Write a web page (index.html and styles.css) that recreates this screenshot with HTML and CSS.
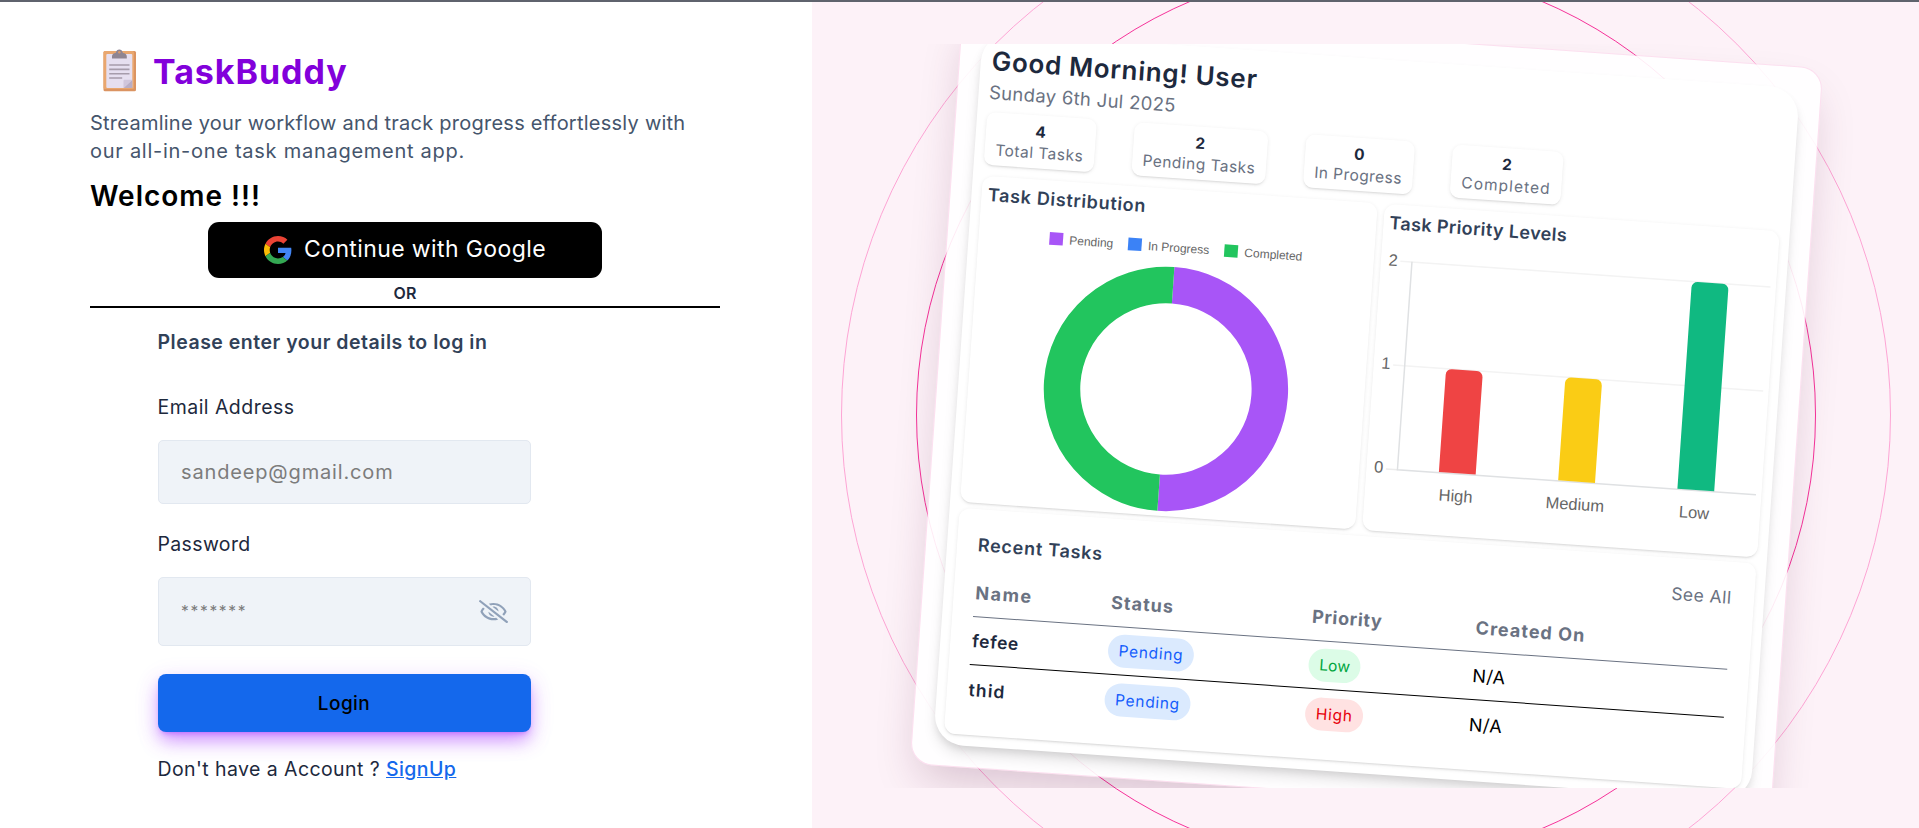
FILE: index.html
```
<!DOCTYPE html>
<html lang="en">
<head>
<meta charset="utf-8">
<title>TaskBuddy</title>
<link rel="stylesheet" href="styles.css">
</head>
<body>
<main class="page">
  <section class="auth">
    <div class="brand">
      <svg class="brand-icon" width="34" height="44" viewBox="0 0 34 44">
        <rect x="0.5" y="2" width="32.5" height="40.3" rx="1.5" fill="#db9462"/>
        <rect x="0.5" y="2" width="30.5" height="38" rx="1.5" fill="#e9a76f"/>
        <rect x="3.3" y="5" width="26" height="34" rx="1" fill="#e6dff0"/>
        <path d="M20.5 39l8.8-8.3V39z" fill="#b9aec6"/>
        <path d="M20.5 39v-7.3q0-1 1-1h7.8z" fill="#d0c6dc"/>
        <path d="M9 7.5c0-2 1.5-3.3 3.6-3.4C13.400 1.500 14.500.5 16.300.5s2.900 1 3.700 3.600c2.100.1 3.800 1.400 3.800 3.400v2H9z" fill="#8f8592"/>
        <circle cx="16.300" cy="3.200" r="1.200" fill="#d99a6c"/>
        <path d="M6.200 16h20.300M6.200 20.400h20.300M6.200 24.700h20.300M6.200 29h13" stroke="#a69cab" stroke-width="1.600"/>
      </svg>
      <h1 class="brand-name">TaskBuddy</h1>
    </div>
    <p class="tagline"><span class="tag-a">Streamline your workflow and track progress effortlessly with</span><br><span class="tag-b">our all-in-one task management app.</span></p>
    <h2 class="welcome">Welcome !!!</h2>
    <button class="google" type="button">
      <svg width="28" height="28" viewBox="0 0 48 48">
        <path fill="#EA4335" d="M24 9.500c3.540 0 6.710 1.220 9.210 3.600l6.850-6.850C35.900 2.380 30.470 0 24 0 14.620 0 6.510 5.380 2.560 13.220l7.980 6.190C12.430 13.720 17.740 9.500 24 9.500z"/>
        <path fill="#4285F4" d="M46.980 24.550c0-1.570-.15-3.090-.38-4.550H24v9.020h12.940c-.58 2.960-2.260 5.480-4.780 7.180l7.730 6c4.510-4.180 7.090-10.360 7.090-17.650z"/>
        <path fill="#FBBC05" d="M10.530 28.590c-.48-1.450-.76-2.990-.76-4.590s.27-3.140.76-4.590l-7.980-6.190C.92 16.460 0 20.120 0 24c0 3.880.92 7.540 2.560 10.780l7.970-6.190z"/>
        <path fill="#34A853" d="M24 48c6.480 0 11.930-2.130 15.890-5.810l-7.730-6c-2.150 1.450-4.920 2.300-8.160 2.300-6.260 0-11.570-4.220-13.470-9.910l-7.980 6.190C6.510 42.620 14.620 48 24 48z"/>
      </svg>
      <span>Continue with Google</span>
    </button>
    <div class="or">OR</div>
    <form class="form">
      <h3 class="form-title">Please enter your details to log in</h3>
      <label class="label">Email Address</label>
      <div class="field"><span class="placeholder">sandeep@gmail.com</span></div>
      <label class="label label-pw">Password</label>
      <div class="field field-pw">
        <span class="placeholder stars">*******</span>
        <svg width="29" height="23.200" viewBox="0 0 640 512" fill="#90a1b9"><path d="M634 471L36 3.510A16 16 0 0 0 13.510 6l-10 12.490A16 16 0 0 0 6 41l598 467.490a16 16 0 0 0 22.490-2.490l10-12.490A16 16 0 0 0 634 471zM296.790 146.470l134.790 105.380C429.360 191.910 380.480 144 320 144a112.260 112.260 0 0 0-23.210 2.470zm46.420 219.070L208.420 260.160C210.650 320.090 259.530 368 320 368a113 113 0 0 0 23.210-2.460zM320 112c98.650 0 189.090 55 237.930 144a285.530 285.530 0 0 1-44 60.200l37.740 29.500a333.700 333.700 0 0 0 52.900-75.110 32.350 32.350 0 0 0 0-29.190C550.290 135.590 442.930 64 320 64c-36.700 0-71.710 7-104.630 18.810l46.410 36.290c18.940-4.300 38.340-7.100 58.220-7.100zm0 288c-98.650 0-189.080-55-237.930-144a285.470 285.470 0 0 1 44.050-60.190l-37.740-29.500a333.600 333.600 0 0 0-52.890 75.100 32.350 32.350 0 0 0 0 29.190C89.720 376.410 197.080 448 320 448c36.700 0 71.710-7.050 104.630-18.810l-46.410-36.280C359.280 397.200 339.890 400 320 400z"/></svg>
      </div>
      <button class="login" type="button">Login</button>
      <p class="signup">Don't have a Account ? <a>SignUp</a></p>
    </form>
  </section>

  <section class="showcase">
    <div class="ring ring-inner"></div>
    <div class="ring ring-outer"></div>
    <div class="stage">
      <div class="frame">
        <div class="board">
          <h2 class="greeting">Good Morning! User</h2>
          <p class="date">Sunday 6th Jul 2025</p>
          <div class="stats">
            <div class="stat stat-1"><b>4</b><span>Total Tasks</span></div>
            <div class="stat stat-2"><b>2</b><span>Pending Tasks</span></div>
            <div class="stat stat-3"><b>0</b><span>In Progress</span></div>
            <div class="stat stat-4"><b>2</b><span>Completed</span></div>
          </div>
          <div class="charts">
            <div class="card">
              <h3 class="card-title t-dist">Task Distribution</h3>
              <svg class="chart" width="396" height="295" viewBox="32.500 198 396 295">
                <g class="legend">
                  <rect x="103.400" y="217.600" width="13.600" height="12.600" fill="#a855f7"/>
                  <rect x="182.200" y="217.600" width="13.600" height="12.600" fill="#3b82f6"/>
                  <rect x="278.600" y="217.600" width="13.600" height="12.600" fill="#22c55e"/>
                  <text x="123.300" y="228.600">Pending</text>
                  <text x="202.200" y="228.600">In Progress</text>
                  <text x="298.800" y="228.600">Completed</text>
                </g>
                <path d="M230 262.050a103.950 103.950 0 0 1 0 207.900" fill="none" stroke="#a855f7" stroke-width="36.500"/>
                <path d="M230 469.950a103.950 103.950 0 0 1 0-207.900" fill="none" stroke="#22c55e" stroke-width="36.500"/>
              </svg>
            </div>
            <div class="card">
              <h3 class="card-title t-prio">Task Priority Levels</h3>
              <svg class="chart" width="396" height="295" viewBox="434.500 198 396 295">
                <path d="M454 222.200H825M454 326.300H825" stroke="#f3f3f3" stroke-width="1.500"/>
                <path d="M454 430.400h12" stroke="#ececec" stroke-width="1.500"/>
                <path d="M465.600 222v208.400H825" fill="none" stroke="#dfe1e3" stroke-width="1.500"/>
                <path d="M507.100 429.800V332.300a6 6 0 0 1 6-6h24.900a6 6 0 0 1 6 6v97.500z" fill="#ef4444"/>
                <path d="M626.700 429.800V332.300a6 6 0 0 1 6-6h24.900a6 6 0 0 1 6 6v97.500z" fill="#facc15"/>
                <path d="M746.200 429.800V228.200a6 6 0 0 1 6-6h24.900a6 6 0 0 1 6 6v201.600z" fill="#10b981"/>
                <g class="ticks">
                  <text x="446.700" y="227.300">2</text>
                  <text x="446.700" y="330.700">1</text>
                  <text x="446.700" y="434.500">0</text>
                  <text x="525.500" y="458.200">High</text>
                  <text x="645" y="458.200">Medium</text>
                  <text x="764.500" y="458.200">Low</text>
                </g>
              </svg>
            </div>
          </div>
          <div class="card recent">
            <div class="recent-head"><h3 class="t-recent">Recent Tasks</h3><span class="see-all">See All</span></div>
            <div class="row head"><span class="h-name">Name</span><span class="h-status">Status</span><span class="h-prio">Priority</span><span class="h-created">Created On</span></div>
            <div class="row"><span class="name">fefee</span><span class="badge blue">Pending</span><span class="badge green">Low</span><span class="na">N/A</span></div>
            <div class="row last"><span class="name name-b">thid</span><span class="badge blue">Pending</span><span class="badge red">High</span><span class="na">N/A</span></div>
          </div>
        </div>
      </div>
    </div>
  </section>
</main>
</body>
</html>
```
FILE: styles.css
```
* { box-sizing: border-box; margin: 0; padding: 0; }
body { font-family: Inter, "Noto Sans", sans-serif; background: #fff; color: #000; overflow: hidden; }
svg { display: block; flex: none; }
button { font-family: inherit; border: 0; }

.page { display: grid; grid-template-columns: 812px 1fr; grid-template-rows: 826px; height: 828px; border-top: 2px solid #5f636d; }

/* Sign-in column */
.auth { padding: 43px 92px 0 90px; }
.brand { display: flex; align-items: center; height: 54px; padding-left: 12.5px; gap: 16.5px; margin-bottom: 10px; }
.brand-icon { margin-top: -2px; }
.brand-name { font-size: 34px; line-height: 54px; font-weight: 700; letter-spacing: .95px; color: #8200db; }
.tagline { font-size: 20px; line-height: 28px; color: #45556c; white-space: nowrap; }
.tag-a { letter-spacing: .245px; }
.tag-b { letter-spacing: .73px; }
.welcome { margin-top: 13px; font-size: 28px; line-height: 36px; font-weight: 600; letter-spacing: .97px; }
.google { display: flex; align-items: center; justify-content: center; gap: 12px; width: 394px; height: 56px; margin: 8px auto 0 118px; border-radius: 11px; background: #000; color: #fff; font-size: 23px; letter-spacing: .39px; }
.google span { padding-bottom: 3px; }
.or { height: 30px; padding-top: 2px; line-height: 26px; font-size: 16px; font-weight: 600; letter-spacing: .2px; text-align: center; color: #1d293d; border-bottom: 2px solid #000; }
.form { width: 373px; margin: 20px 0 0 67.500px; }
.form-title { font-size: 19.5px; line-height: 28px; font-weight: 600; letter-spacing: .51px; color: #314158; white-space: nowrap; }
.label { display: block; margin-top: 37px; font-size: 19.5px; line-height: 28px; letter-spacing: .46px; color: #1d293d; }
.label-pw { margin-top: 26px; letter-spacing: .35px; }
.field { display: flex; align-items: center; justify-content: space-between; height: 64px; margin-top: 19px; padding: 0 22.5px; border: 1px solid #e2e8f0; border-radius: 5px; background: #eff3f8; color: #7c7c7c; font-size: 20px; }
.placeholder { letter-spacing: .85px; }
.field-pw { height: 69px; padding-right: 22px; }
.stars { font-size: 15.5px; letter-spacing: 1.7px; }
.login { display: block; width: 100%; height: 58px; margin-top: 28px; border-radius: 8px; background: #1468ec; font-size: 19px; font-weight: 500; letter-spacing: .456px; box-shadow: 0 10px 18px -2px rgba(173, 70, 255, .55), 0 4px 6px -4px rgba(173, 70, 255, .8), 0 6px 26px rgba(173, 70, 255, .14); }
.signup { margin-top: 23px; font-size: 19.5px; line-height: 28px; letter-spacing: .42px; color: #1d293d; white-space: nowrap; }
.signup a { color: #1468ec; font-weight: 500; text-decoration: underline; }

/* Preview panel */
.showcase { position: relative; display: grid; align-items: center; overflow: hidden; background: #fdf2f8; }
.ring { position: absolute; left: 50%; top: 50%; border-radius: 50%; transform: translate(-50%, -50%); }
.ring-inner { width: 900px; height: 900px; border: 1px solid #f6339a; }
.ring-outer { width: 1050px; height: 1050px; border: 1px solid #fda5d5; }
.stage { position: relative; display: grid; grid-template-rows: 744px; place-items: center; height: 744px; margin-top: 2px; padding-left: 1.500px; overflow: hidden; }
.frame { width: 863px; height: 758px; padding: 21px; border: 1px solid rgba(252, 206, 232, .5); border-radius: 22px; background: rgba(255, 255, 255, .9); background-clip: padding-box; transform: rotate(4deg); box-shadow: 0 22px 45px -10px rgba(80, 20, 60, .22); }
.board { width: 819px; height: 714px; padding: 10px; border-radius: 30px; background: #fff; box-shadow: 0 10px 15px -3px rgba(0, 0, 0, .12), 0 4px 8px -2px rgba(0, 0, 0, .1); }
.greeting { padding-left: 1px; font-size: 26px; line-height: 37px; font-weight: 600; letter-spacing: .73px; color: #1d293d; }
.date { padding-left: .5px; font-size: 18.5px; line-height: 27px; letter-spacing: .309px; color: #6a7282; }
.stats { display: flex; gap: 38.3px; margin-top: 6px; height: 53px; }
.stat { display: flex; flex-direction: column; align-items: center; padding-top: 6px; border-radius: 9px; background: #fff; font-size: 15.5px; line-height: 21px; color: #6a7282; white-space: nowrap; box-shadow: 0 1px 4px rgba(0, 0, 0, .08), 0 2px 2px -1px rgba(0, 0, 0, .1); }
.stat b { font-weight: 700; color: #1d293d; }
.stat-1 { width: 109.500px; letter-spacing: .5px; }
.stat-2 { width: 134px; letter-spacing: .48px; }
.stat-3 { width: 108.500px; letter-spacing: .45px; }
.stat-4 { width: 111.500px; letter-spacing: 1.05px; }
.charts { display: grid; grid-template-columns: 396px 396px; gap: 6.500px; margin-top: 11.300px; }
.card { border-radius: 11px; background: #fff; box-shadow: 0 1px 4px rgba(0, 0, 0, .08), 0 2px 2px -1px rgba(0, 0, 0, .1); }
.charts .card { height: 327.200px; padding-top: 4.500px; }
.card-title { padding-left: 6.500px; height: 27px; font-size: 18px; line-height: 27px; font-weight: 600; color: #314158; }
.t-dist { letter-spacing: .68px; }
.t-prio { letter-spacing: .4px; }
.legend { font: 12px "Liberation Sans", Arial, sans-serif; fill: #666; }
.ticks { font: 16.5px "Liberation Sans", Arial, sans-serif; fill: #666; text-anchor: middle; }
.recent { width: 798.500px; height: 226.500px; margin-top: 5.500px; padding: 22px 22px 0 20.800px; }
.recent-head { display: flex; justify-content: space-between; height: 27px; line-height: 27px; font-size: 17.5px; color: #6a7282; }
.t-recent { font-size: 18px; font-weight: 600; letter-spacing: .77px; color: #314158; }
.see-all { letter-spacing: .484px; }
.row { display: grid; grid-template-columns: 136px 201.500px 164px 1fr; align-items: center; justify-items: start; height: 48.300px; padding-left: 1px; font-size: 18px; border-bottom: 1px solid #000; }
.row.head { height: 59px; padding-top: 11px; font-weight: 700; color: #6a7282; border-color: #6a7282; }
.row.last { border: 0; }
.h-name { letter-spacing: 1.5px; }
.h-status { letter-spacing: 1.03px; }
.h-prio { letter-spacing: .65px; }
.h-created { letter-spacing: 1.04px; }
.name { font-size: 17.5px; font-weight: 600; letter-spacing: .62px; color: #1d293d; }
.name-b { letter-spacing: 1.1px; }
.badge { height: 33px; border-radius: 17px; line-height: 33px; font-size: 15.5px; text-align: center; }
.blue { width: 86.500px; background: #dbeafe; color: #155dfc; letter-spacing: .7px; }
.green { width: 52px; background: #dcfce7; color: #00a63e; letter-spacing: .2px; }
.red { width: 58px; background: #ffe2e2; color: #e7000b; letter-spacing: .75px; }
.na { letter-spacing: .4px; color: #000; }
```
